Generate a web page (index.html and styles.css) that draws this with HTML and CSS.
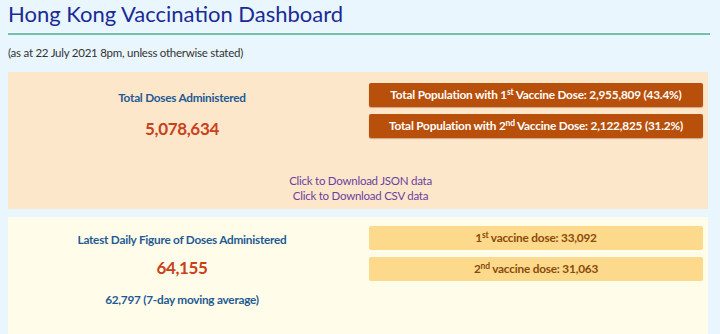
FILE: index.html
```html
<!DOCTYPE html>
<html lang="en">
<head>
<meta charset="utf-8">
<title>Hong Kong Vaccination Dashboard</title>
<link rel="stylesheet" href="styles.css">
</head>
<body>
  <h1 class="title">Hong Kong Vaccination Dashboard</h1>
  <p class="asat">(as at 22 July 2021 8pm, unless otherwise stated)</p>

  <section class="panel panel-total">
    <div class="grid">
      <div class="main">
        <div class="label">Total Doses Administered</div>
        <div class="figure">5,078,634</div>
      </div>
      <div class="bars">
        <div class="bar bar-dark">Total Population with 1<sup>st</sup> Vaccine Dose: 2,955,809 (43.4%)</div>
        <div class="bar bar-dark">Total Population with 2<sup>nd</sup> Vaccine Dose: 2,122,825 (31.2%)</div>
      </div>
    </div>
    <div class="links">
      <a href="#">Click to Download JSON data</a>
      <a href="#">Click to Download CSV data</a>
    </div>
  </section>

  <section class="panel panel-daily">
    <div class="grid">
      <div class="main main-daily">
        <div class="label">Latest Daily Figure of Doses Administered</div>
        <div class="figure">64,155</div>
        <div class="avg">62,797 (7-day moving average)</div>
      </div>
      <div class="bars">
        <div class="bar bar-light">1<sup>st</sup> vaccine dose: 33,092</div>
        <div class="bar bar-light">2<sup>nd</sup> vaccine dose: 31,063</div>
      </div>
    </div>
  </section>
</body>
</html>
```

FILE: styles.css
```css
html, body {
  background: #eaf6fd;
}
body {
  margin: 0 10px 0 8px;
  font-family: Lato, "Liberation Sans", sans-serif;
  color: #333;
}
.title {
  margin: 0;
  font-size: 22px;
  font-weight: 400;
  line-height: 28px;
  color: #1a2a96;
  padding-bottom: 5px;
  border-bottom: 2px solid #6cc3b0;
  box-shadow: 0 -1px 0 #fff inset;
}
.asat {
  margin: 10px 0 11px;
  font-size: 11.5px;
  letter-spacing: -0.25px;
  line-height: 16px;
  color: #333;
}
.panel {
  margin-right: 2px;
}
.panel-total {
  background: #fde7cb;
  padding: 11px 5px 6px 0;
}
.panel-daily {
  margin-top: 8px;
  background: #fffde9;
  padding: 9px 5px 40px 0;
}
.grid {
  display: grid;
  grid-template-columns: 348px 1fr;
  column-gap: 13px;
}
.main {
  text-align: center;
  padding-top: 7px;
}
.main-daily {
  padding-top: 6px;
}
.label {
  font-size: 11.8px;
  letter-spacing: -0.25px;
  line-height: 16px;
  font-weight: 700;
  color: #1f5a94;
}
.figure {
  margin-top: 11px;
  font-size: 17px;
  letter-spacing: -0.35px;
  line-height: 24px;
  font-weight: 700;
  color: #c9401a;
}
.main-daily .figure {
  margin-top: 8px;
}
.avg {
  margin-top: 12px;
  font-size: 11.8px;
  letter-spacing: -0.25px;
  line-height: 16px;
  font-weight: 700;
  color: #1f5a94;
}
.bars {
  display: flex;
  flex-direction: column;
  gap: 7px;
}
.bar {
  height: 24px;
  line-height: 24px;
  text-align: center;
  border-radius: 2px;
  font-size: 11.8px;
  letter-spacing: -0.2px;
  font-weight: 700;
}
.bar sup {
  font-size: 8.5px;
  line-height: 0;
  vertical-align: 0;
  position: relative;
  top: -4px;
}
.bar-dark {
  background: #b84f0a;
  color: #fff;
  box-shadow: 0 1px 1px rgba(120, 50, 0, 0.35);
}
.bar-light {
  background: #fdd98b;
  color: #8a4a0c;
}
.links {
  margin-top: 32px;
  padding-left: 10px;
  display: flex;
  flex-direction: column;
  align-items: center;
  font-size: 11.5px;
  letter-spacing: -0.25px;
  line-height: 15px;
}
.links a {
  color: #6b3fa0;
  text-decoration: none;
}
```
